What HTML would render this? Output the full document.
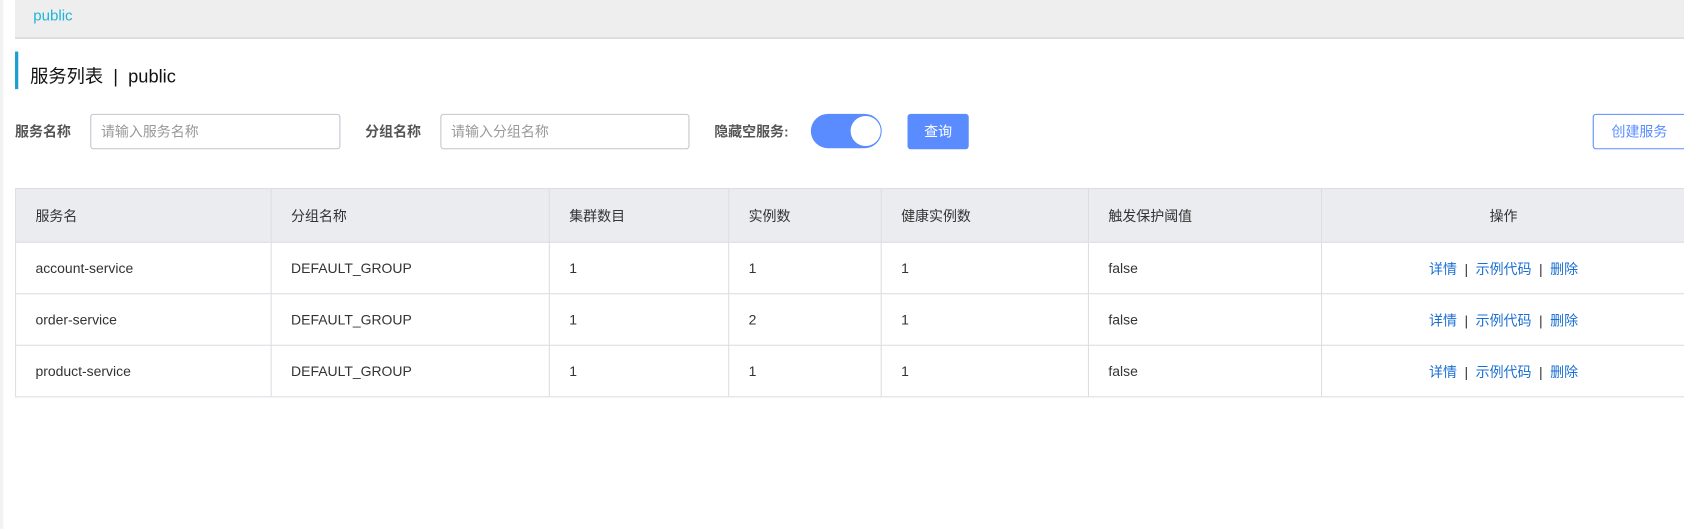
<!DOCTYPE html>
<html><head><meta charset="utf-8"><style>
html,body{margin:0;padding:0;background:#fff;overflow:hidden;width:1684px;height:529px}
#w{position:absolute;left:0;top:0;width:1568px;height:493px;transform:scale(1.07398);transform-origin:0 0;font-family:"Liberation Sans","Noto Sans CJK SC",sans-serif;color:#333}
.a{position:absolute}
.lbl{font-size:13px;font-weight:bold;color:#555;top:112px}
.inp{top:106px;border:1px solid #c4c6cf;border-radius:3px;font-size:13px;color:#999;line-height:32px;padding-left:9px;box-sizing:border-box;height:33px}
table{position:absolute;left:14px;top:175px;width:1556px;border-collapse:collapse;font-size:13px}
td,th{border:1px solid #dcdee3;text-align:left;padding:0 0 0 18px;font-weight:normal;color:#333}
th{background:#ebecef;height:49px}
td{height:47px}
.op{text-align:center;padding:0}
.op a{color:#1a6fd4;text-decoration:none}
.op span{color:#333;margin:0 7px}
</style></head><body><div id="w">
<div class="a" style="left:0;top:0;width:3px;height:493px;background:#f2f2f2"></div>
<div class="a" style="left:14px;top:0;width:1554px;height:35px;background:#eeeeee;border-bottom:1px solid #ccc"></div>
<div class="a" style="left:31px;top:6px;font-size:14px;color:#1fb4d6">public</div>
<div class="a" style="left:14px;top:48px;width:3px;height:35px;background:#1b9fd1"></div>
<div class="a" style="left:28px;top:57px;font-size:17px;color:#111">服务列表 &nbsp;|&nbsp; public</div>
<div class="a lbl" style="left:14px">服务名称</div>
<div class="a inp" style="left:84px;width:233px">请输入服务名称</div>
<div class="a lbl" style="left:340px">分组名称</div>
<div class="a inp" style="left:410px;width:232px">请输入分组名称</div>
<div class="a lbl" style="left:665px">隐藏空服务:</div>
<div class="a" style="left:755px;top:106px;width:66px;height:32px;border-radius:16px;background:#5a8cff"></div>
<div class="a" style="left:792px;top:108px;width:28px;height:28px;border-radius:14px;background:#fff"></div>
<div class="a" style="left:845px;top:106px;width:57px;height:33px;border-radius:3px;background:#5a8cff;color:#fff;font-size:13px;line-height:33px;text-align:center">查询</div>
<div class="a" style="left:1483px;top:106px;width:87px;height:33px;box-sizing:border-box;border:1px solid #5a8cff;border-radius:3px;color:#5a8cff;font-size:13px;line-height:31px;text-align:center">创建服务</div>
<table>
<tr><th style="width:219px">服务名</th><th style="width:240px">分组名称</th><th style="width:148px">集群数目</th><th style="width:123px">实例数</th><th style="width:174px">健康实例数</th><th style="width:198px">触发保护阈值</th><th class="op">操作</th></tr>
<tr><td>account-service</td><td>DEFAULT_GROUP</td><td>1</td><td>1</td><td>1</td><td>false</td><td class="op"><a>详情</a><span>|</span><a>示例代码</a><span>|</span><a>删除</a></td></tr>
<tr><td>order-service</td><td>DEFAULT_GROUP</td><td>1</td><td>2</td><td>1</td><td>false</td><td class="op"><a>详情</a><span>|</span><a>示例代码</a><span>|</span><a>删除</a></td></tr>
<tr><td>product-service</td><td>DEFAULT_GROUP</td><td>1</td><td>1</td><td>1</td><td>false</td><td class="op"><a>详情</a><span>|</span><a>示例代码</a><span>|</span><a>删除</a></td></tr>
</table>
</div></body></html>
